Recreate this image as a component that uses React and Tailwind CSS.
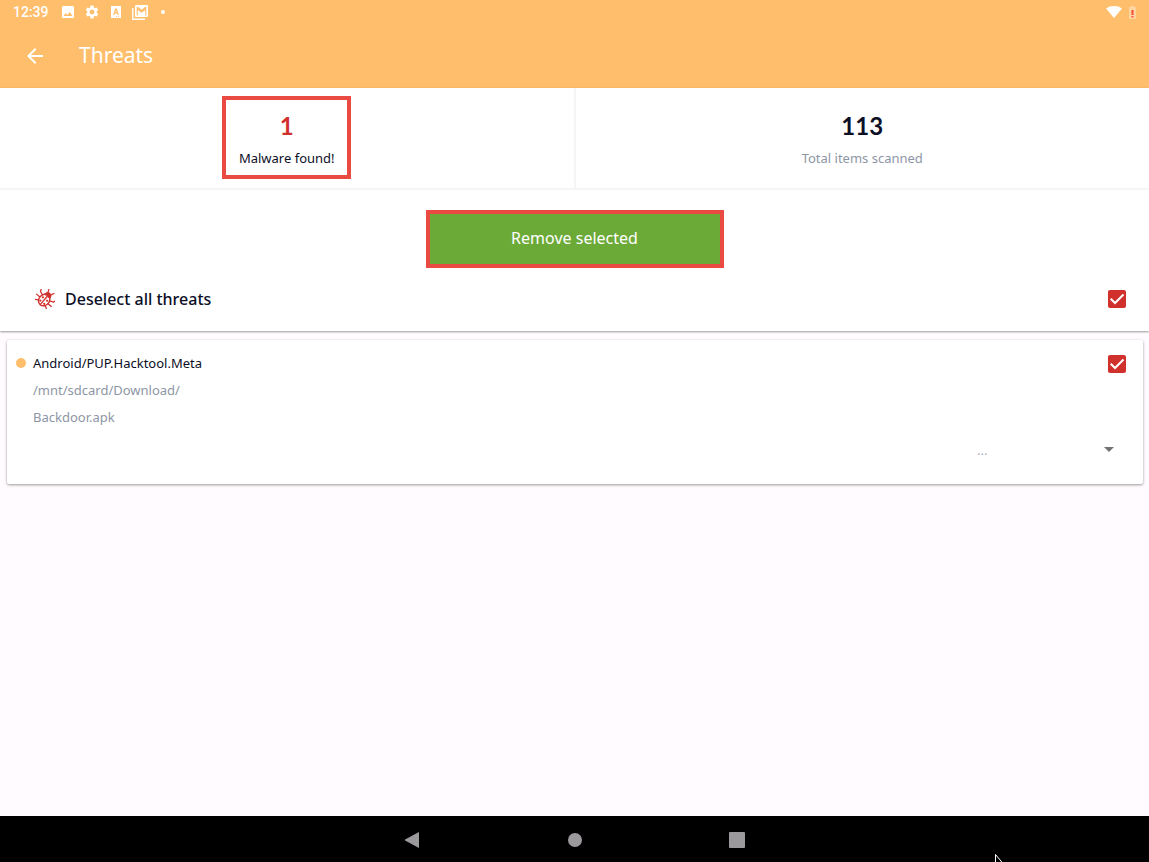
import React, { useState } from 'react';
import { MdArrowBack, MdArrowDropDown, MdImage, MdSettings } from 'react-icons/md';

const THREATS = [
  {
    id: 'hacktool-meta',
    name: 'Android/PUP.Hacktool.Meta',
    folder: '/mnt/sdcard/Download/',
    file: 'Backdoor.apk'
  }
];

const TOTAL_SCANNED = 113;

const LetterIcon = () => (
  <svg viewBox="0 0 10 12" className="h-3 w-[10px]" aria-hidden="true">
    <path fill="#fff" fillRule="evenodd" d="M0 0h10v12H0zM4.2 2.6 2 8.800h1.500l.4-1.300h2.200l.4 1.300H8L5.800 2.600zM5 4.200l.7 2.100H4.300zM5 10h1v.8H5zM7 10h1v.8H7z" />
  </svg>
);

const MailStackIcon = () => (
  <svg viewBox="0 0 16 15" className="h-[15px] w-4" aria-hidden="true">
    <path fill="none" stroke="#fff" strokeWidth="1.4" d="M.8 3v11.2H13" />
    <path fill="#fff" fillRule="evenodd" d="M4 0h11a1 1 0 0 1 1 1v10a1 1 0 0 1-1 1H4a1 1 0 0 1-1-1V1a1 1 0 0 1 1-1zM5.800 10.500V5l3.700 2.800L13.200 5v5.500h1.100V1.800h-1L9.500 4.800 5.700 1.800h-1v8.700z" />
  </svg>
);

const WifiIcon = () => (
  <svg viewBox="0 0 16 12" className="h-3 w-4" aria-hidden="true">
    <path fill="#fff" d="M0 2.600C2.200.8 5 0 8 0s5.800.8 8 2.600L8 12z" />
  </svg>
);

const BatteryIcon = () => (
  <svg viewBox="0 0 7 13" className="h-[13px] w-[7px]" aria-hidden="true">
    <path fill="#ffd6a2" d="M2 0h3v1h1.200q.8 0 .8.8v10.400q0 .8-.8.8H.8q-.8 0-.8-.8V1.800q0-.8.8-.8H2z" />
    <path fill="#ff4a35" d="M2.500 4h2v5h-2zM2.500 10h2v1.500h-2z" />
  </svg>
);

const BugIcon = () => (
  <svg viewBox="0 0 24 24" className="h-5 w-5" fill="none" stroke="#d0312d" strokeLinecap="round" aria-hidden="true">
    <g transform="rotate(40 12 12)">
      <ellipse cx="12" cy="13.500" rx="6.300" ry="7.500" strokeWidth="1.700" />
      <path d="M8 7.500C8.300 4 9.500 3 12 3s3.700 1 4 4.500z" fill="#d0312d" />
      <path strokeWidth="1.500" d="M12 8.500v12" />
      <circle cx="8.800" cy="12" r=".7" strokeWidth="1.200" />
      <circle cx="15.200" cy="12" r=".7" strokeWidth="1.200" />
      <circle cx="9" cy="17" r=".7" strokeWidth="1.200" />
      <circle cx="15" cy="17" r=".7" strokeWidth="1.200" />
      <path strokeWidth="1.500" d="M9.500 3 8 0M14.500 3 16 0M6 10 2 8.500 1 6M18 10l4-1.500L23 6M5.700 14H.5M18.300 14h5.200M6.500 18l-3.500 2-.5 3M17.500 18l3.500 2 .5 3" />
    </g>
  </svg>
);

const CheckBox = ({ id, label, checked, onChange }) => (
  <span className="relative flex h-[18px] w-[18px]">
    <input
      id={id}
      type="checkbox"
      aria-label={label}
      checked={checked}
      onChange={onChange}
      className="h-[18px] w-[18px] appearance-none rounded-xs border-2 border-[#d0312d] checked:bg-[#d0312d]"
    />
    {checked && (
      <svg viewBox="0 0 18 18" className="pointer-events-none absolute inset-0" aria-hidden="true">
        <path fill="none" stroke="#fff" strokeWidth="2" d="M2.700 8.700 7 13l8.500-8.500" />
      </svg>
    )}
  </span>
);

const StatusBar = () => (
  <div className="flex h-6 items-center justify-between px-[13px]">
    <div className="flex items-center text-white">
      <span className="w-[47px] font-[Roboto,sans-serif] text-sm font-medium">12:39</span>
      <MdImage className="h-4 w-4" />
      <MdSettings className="ml-2 h-4 w-4" />
      <span className="ml-[11px]"><LetterIcon /></span>
      <span className="ml-[11px]"><MailStackIcon /></span>
      <span className="ml-[13px] h-1 w-1 rounded-full bg-white" />
    </div>
    <div className="flex items-center gap-[7px]">
      <WifiIcon />
      <BatteryIcon />
    </div>
  </div>
);

const Stat = ({ value, label, boxClass, valueClass, labelClass }) => (
  <div className="flex flex-1 justify-center pt-2 pb-[9px]">
    <div className={`h-[83px] min-w-[129px] border-4 pt-[10px] text-center ${boxClass}`}>
      <p className={`font-[Lato,sans-serif] text-2xl leading-8 font-bold ${valueClass}`}>{value}</p>
      <p className={`text-[13px] leading-8 ${labelClass}`}>{label}</p>
    </div>
  </div>
);

const ThreatCard = ({ threat, checked, onToggle }) => (
  <li className="rounded-xs bg-white pt-[10px] pr-[17px] pb-[23px] pl-[9px] shadow-[0_1px_3px_rgba(0,0,0,0.4)]">
    <div className="flex items-start justify-between">
      <div className="flex">
        <span className="mt-2 mr-[7px] h-[10px] w-[10px] rounded-full bg-[#ffbe6b]" />
        <div className="text-[13px] leading-[27px] text-[#8d96a6]">
          <label htmlFor={threat.id} className="block text-[#0c0f26]">{threat.name}</label>
          <p>{threat.folder}</p>
          <p>{threat.file}</p>
        </div>
      </div>
      <div className="pt-[5px]">
        <CheckBox id={threat.id} checked={checked} onChange={onToggle} />
      </div>
    </div>
    <div className="mt-[6px] mr-[5px] flex justify-end">
      <div className="relative flex w-36 items-center">
        <select aria-label="Action" className="h-6 w-full appearance-none bg-transparent pt-1 text-[13px] text-[#a9b0be]">
          <option>...</option>
          <option>Remove</option>
          <option>Ignore</option>
        </select>
        <MdArrowDropDown className="pointer-events-none absolute right-0 h-6 w-6 text-[#737373]" />
      </div>
    </div>
  </li>
);

const NavBar = () => (
  <nav className="relative flex h-[46px] items-center justify-center gap-[146px] overflow-hidden bg-black pt-0.5">
    <button type="button" aria-label="Back" className="flex w-4 justify-center">
      <svg viewBox="0 0 16 16" className="h-4 w-4" fill="#9c999c"><path d="M14 0v16L0 8.500v-1z" /></svg>
    </button>
    <button type="button" aria-label="Home" className="flex w-4 justify-center">
      <svg viewBox="0 0 16 16" className="h-4 w-4" fill="#9c999c"><circle cx="8" cy="8" r="7" /></svg>
    </button>
    <button type="button" aria-label="Recent apps" className="flex w-4 justify-center">
      <svg viewBox="0 0 16 16" className="h-4 w-4" fill="#9c999c"><rect width="16" height="16" rx="1" /></svg>
    </button>
    {/* Mouse pointer, cut off by the bottom edge */}
    <svg viewBox="0 0 12 18" className="absolute top-[38px] right-[142px] h-[18px] w-3" aria-hidden="true">
      <path fill="#000" stroke="#fff" d="M.5.500v15.500l3.500-3.500h6.500z" />
    </svg>
  </nav>
);

export default function App() {
  const [selected, setSelected] = useState(THREATS.map(t => t.id));
  const allSelected = selected.length === THREATS.length;

  const toggleAll = () => setSelected(allSelected ? [] : THREATS.map(t => t.id));
  const toggle = (id) =>
    setSelected(selected.includes(id) ? selected.filter(s => s !== id) : [...selected, id]);

  return (
    <div className="flex min-h-screen flex-col bg-[#fffbfe] font-['Noto_Sans',sans-serif] text-[#0c0f26]">
      <header className="bg-[#ffbe6b] text-white">
        <StatusBar />
        <div className="flex h-16 items-center pl-[23px]">
          <button type="button" aria-label="Go back"><MdArrowBack className="h-6 w-6" /></button>
          <h1 className="ml-8 text-[21px]">Threats</h1>
        </div>
      </header>

      <main className="flex-1">
        <section className="bg-white shadow-[0_1px_2px_rgba(0,0,0,0.4)]">
          <div className="flex divide-x-2 divide-[#f5f5f5] border-b-2 border-[#f5f5f5]">
            <Stat
              value={THREATS.length}
              label="Malware found!"
              boxClass="border-[#e94b43]"
              valueClass="text-[#d0312d]"
              labelClass="text-[#0c0f26]"
            />
            <Stat
              value={TOTAL_SCANNED}
              label="Total items scanned"
              boxClass="border-transparent"
              valueClass="text-[#0c0f26]"
              labelClass="text-[#8d96a6]"
            />
          </div>
          <div className="flex justify-center pt-5">
            <button type="button" className="h-[58px] w-[298px] border-4 border-[#e94b43] bg-[#6caa38] pb-0.5 text-base text-white">
              Remove selected
            </button>
          </div>
          <div className="flex h-[63px] items-center justify-between pr-[23px] pb-0.5 pl-[35px]">
            <label htmlFor="all-threats" className="flex items-center gap-[10px] text-base font-medium">
              <BugIcon />
              {allSelected ? 'Deselect all threats' : 'Select all threats'}
            </label>
            <CheckBox id="all-threats" checked={allSelected} onChange={toggleAll} />
          </div>
        </section>

        <ul className="flex flex-col gap-2 pt-[9px] pr-[6px] pl-[7px]">
          {THREATS.map(threat => (
            <ThreatCard
              key={threat.id}
              threat={threat}
              checked={selected.includes(threat.id)}
              onToggle={() => toggle(threat.id)}
            />
          ))}
        </ul>
      </main>

      <NavBar />
    </div>
  );
}
